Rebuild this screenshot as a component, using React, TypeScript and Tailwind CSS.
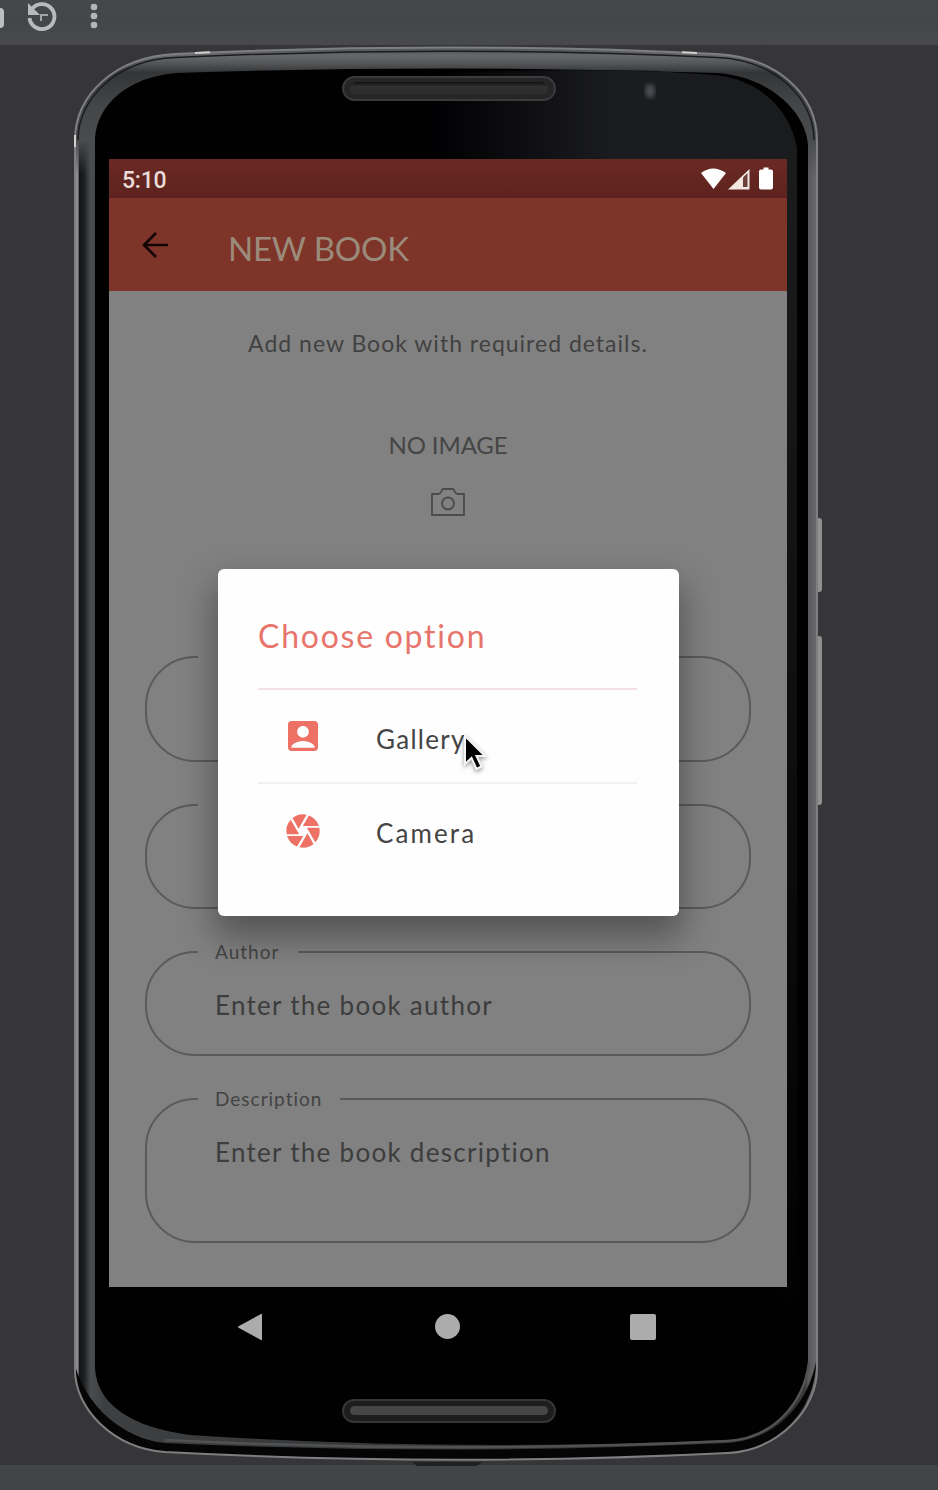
import React from "react";
import { MdAccountBox, MdCamera } from "react-icons/md";

function PhoneFrame() {
  return (
    <svg className="pointer-events-none absolute inset-0" width="938" height="1490" viewBox="0 0 938 1490" fill="none">
      <defs>
        <linearGradient id="rim" x1="75" y1="0" x2="817" y2="0" gradientUnits="userSpaceOnUse">
          <stop offset="0" stopColor="#8d8e8f" />
          <stop offset="0.004" stopColor="#8a8b8c" />
          <stop offset="0.006" stopColor="#131415" />
          <stop offset="0.012" stopColor="#1c1d1e" />
          <stop offset="0.021" stopColor="#4b4c4d" />
          <stop offset="0.04" stopColor="#3e3f40" />
          <stop offset="0.96" stopColor="#2b2c2d" />
          <stop offset="0.984" stopColor="#3a3b3c" />
          <stop offset="0.988" stopColor="#58595a" />
          <stop offset="1" stopColor="#69696b" />
        </linearGradient>
        <linearGradient id="topRim" x1="0" y1="47" x2="0" y2="175" gradientUnits="userSpaceOnUse">
          <stop offset="0" stopColor="#505152" />
          <stop offset="0.07" stopColor="#66686a" />
          <stop offset="0.13" stopColor="#545556" />
          <stop offset="0.2" stopColor="#343536" />
          <stop offset="0.45" stopColor="#444546" />
          <stop offset="0.72" stopColor="#4a4b4c" />
          <stop offset="1" stopColor="#4a4b4c" stopOpacity="0" />
        </linearGradient>
        <linearGradient id="glass" x1="430" y1="0" x2="800" y2="0" gradientUnits="userSpaceOnUse">
          <stop offset="0" stopColor="#000002" />
          <stop offset="0.5" stopColor="#1b1c20" />
          <stop offset="1" stopColor="#1a1b1d" />
        </linearGradient>
        <linearGradient id="glassFade" x1="0" y1="159" x2="0" y2="1300" gradientUnits="userSpaceOnUse">
          <stop offset="0" stopColor="#000" stopOpacity="0" />
          <stop offset="1" stopColor="#000" stopOpacity="0.95" />
        </linearGradient>
        <linearGradient id="slot" x1="0" y1="0" x2="0" y2="1">
          <stop offset="0" stopColor="#101011" />
          <stop offset="0.35" stopColor="#303031" />
          <stop offset="1" stopColor="#2b2b2c" />
        </linearGradient>
        <filter id="soft"><feGaussianBlur stdDeviation="2" /></filter>
      </defs>
      <rect x="814" y="518" width="8" height="74" rx="3" fill="#919192" />
      <rect x="814" y="636" width="8" height="169" rx="3" fill="#919192" />
      <path d="M412 1462h70l-5 4h-60z" fill="#202123" />
      <path d="M75 140C75 95 115 57 175 54Q448 41 717 54C777 57 817 95 817 140V1370C817 1408 780 1450 728 1453Q448 1467 165 1452C112 1448 75 1408 75 1370Z" fill="url(#rim)" />
      <path d="M75 175V140C75 95 115 57 175 54Q448 41 717 54C777 57 817 95 817 140V175Z" fill="url(#topRim)" />
      <path d="M75 1365C76 1415 118 1448 165 1452Q448 1467 728 1453C780 1448 816 1408 816 1362C808 1402 778 1440 728 1443Q448 1456 165 1443C122 1439 85 1404 75 1365Z" fill="#050506" />
      <path d="M78 140C78 98 117 60 175 57.500Q448 45 717 57.500C775 60 814 98 814 140" stroke="#1b1c1d" strokeWidth="1.5" />
      <path d="M75 1370V140C75 95 115 57 175 54Q448 41 717 54C777 57 817 95 817 140V1370C817 1408 780 1450 728 1453Q448 1467 165 1452C112 1448 75 1408 75 1370Z" stroke="#7e7f80" strokeWidth="2" />
      <path d="M195 53l15-.7M682 52.300l15 .7M75 135v12" stroke="#cfcfcf" strokeWidth="2" />
      <path d="M95 138C97 106 126 77 177 73Q448 64 717 73C765 76 805 108 808 145V1368C804 1404 773 1437 728 1440Q448 1452 190 1435C130 1427 97 1404 95 1368Z" fill="#010102" />
      <path d="M430 74Q600 66 714 75C758 79 790 108 797 148V1300H780V159H430Z" fill="url(#glass)" />
      <path d="M780 159h17v1141h-17z" fill="url(#glassFade)" />
      <path d="M165 1440Q448 1454 728 1441C773 1438 804 1404 809 1362" stroke="#515253" strokeWidth="2.5" />
      <rect x="343" y="77" width="212" height="23" rx="11.5" fill="#262627" stroke="#3b3b3c" strokeWidth="2" />
      <rect x="350" y="82" width="198" height="13" rx="6.5" fill="url(#slot)" />
      <rect x="343" y="1400" width="212" height="22" rx="11" fill="#1d1d1e" stroke="#353536" strokeWidth="2" />
      <rect x="350" y="1406" width="198" height="9" rx="4.5" fill="#464647" />
      <ellipse cx="650" cy="91" rx="5" ry="7" fill="#4b4d52" filter="url(#soft)" />
    </svg>
  );
}

function Toolbar() {
  return (
    <header className="h-[45px] w-full bg-gradient-to-b from-[#464749] via-[#434749] to-[#48494a]">
      <svg width="120" height="32" viewBox="0 0 120 32" fill="none">
        <rect x="-10" y="8" width="14" height="20" rx="4" fill="#bdbebf" />
        <path d="M31 10.500A12.500 12.500 0 1 1 29.500 18" stroke="#b9babb" strokeWidth="3.800" />
        <path d="M28 3V15H40Z" fill="#b9babb" />
        <path d="M41 21V15H48" stroke="#a3a4a5" strokeWidth="2" />
        <circle cx="94" cy="7" r="3.300" fill="#b4b5b6" />
        <circle cx="94" cy="16" r="3.300" fill="#b4b5b6" />
        <circle cx="94" cy="25" r="3.300" fill="#b4b5b6" />
      </svg>
    </header>
  );
}

function StatusBar() {
  return (
    <div className="flex h-[39px] items-center justify-between bg-gradient-to-b from-[#6b2924] to-[#5d231e] pl-[13px] pr-[12px]">
      <span className="font-[Roboto] text-[23px] font-medium leading-none tracking-[-0.2px] text-[#eadcda] pt-[3px]">5:10</span>
      <svg width="74" height="24" viewBox="0 0 74 24" fill="#fff">
        <path d="M0 6Q12 -3 25 6L12.500 22Z" />
        <path d="M27 22.500L48.500 2V22.500Z" fill="#f4e8e2" />
        <path d="M42 10.500L46.500 6V20H42Z" fill="#6b4039" />
        <path d="M62.500 2.500v-2h5v2h2.500q2 0 2 2v16q0 2-2 2h-10q-2 0-2-2v-16q0-2 2-2z" />
      </svg>
    </div>
  );
}

type FieldProps = { label: string; placeholder: string; size: string; notch: string };

function Field({ label, placeholder, size, notch }: FieldProps) {
  return (
    <fieldset className={`rounded-[50px] border-2 border-[#5a5a5a] ${size}`}>
      <legend className={`ml-[51px] flex h-0 items-center whitespace-nowrap pl-[17px] text-[19px] text-[#434343] ${notch}`}>{label}</legend>
      <p className="pl-[68px] pt-[34px] text-[26px] leading-9 tracking-[1.28px] text-[#3d3d3d]">{placeholder}</p>
    </fieldset>
  );
}

function OptionsDialog() {
  return (
    <div className="absolute left-[109px] top-[410px] h-[347px] w-[461px] rounded-[6px] bg-[#fefefe] pl-[40px] pr-[42px] pt-[44px] shadow-[0_18px_34px_4px_rgba(0,0,0,0.34)]">
      <h2 className="h-[75px] text-[32px] leading-[46px] tracking-[1.75px] text-[#e8756b]">Choose option</h2>
      <div className="flex h-[94px] items-center border-t-2 border-[#f3e0e5] pl-[25px]">
        <MdAccountBox className="h-10 w-10 text-[#ed7165]" />
        <span className="ml-[53px] pt-[5px] text-[26px] leading-9 tracking-[1.3px] text-[#444]">Gallery</span>
      </div>
      <div className="flex h-[95px] items-center border-t-2 border-[#f0f0f2] pl-[25px]">
        <MdCamera className="h-10 w-10 text-[#ed7165]" />
        <span className="ml-[53px] pt-[5px] text-[26px] leading-9 tracking-[2.1px] text-[#444]">Camera</span>
      </div>
      <svg className="absolute left-[244px] top-[164px] drop-shadow-[0_2px_2px_rgba(0,0,0,0.4)]" width="28" height="40" viewBox="0 0 28 40">
        <path d="M3 3V31L9.500 25L14.500 36L19.500 33.500L14.500 23H23Z" fill="#000" stroke="#f4f4f4" strokeWidth="2" />
      </svg>
    </div>
  );
}

function Screen() {
  return (
    <section className="relative flex h-[1128px] w-[678px] flex-col bg-[#818181]">
      <StatusBar />
      <div className="flex h-[93px] items-center bg-[#7f3429] pl-[33px]">
        <svg width="27" height="28" viewBox="0 0 27 28" fill="none" stroke="#120504" strokeWidth="2.700">
          <path d="M26 14H2M14 2L2 14L14 26" />
        </svg>
        <h1 className="ml-[59px] pt-[8px] text-[33px] leading-none tracking-[-0.2px] text-[#9b8b7a]">NEW BOOK</h1>
      </div>
      <p className="mt-[34px] text-center text-[23px] leading-9 tracking-[1px] text-[#414141]">Add new Book with required details.</p>
      <div className="mt-[66px] flex flex-col items-center">
        <p className="text-[24px] leading-9 tracking-[-0.1px] text-[#454545]">NO IMAGE</p>
        <svg className="mt-[25px]" width="34" height="28" viewBox="0 0 34 28" fill="none" stroke="#4b4b4b" strokeWidth="1.800">
          <path d="M1 6H7Q9 6 10 4L11 2Q11.500 1 13 1H21Q22.500 1 23 2L24 4Q25 6 27 6H33V27H1Z" />
          <circle cx="17" cy="15.500" r="6" />
        </svg>
      </div>
      <div className="mt-[140px] flex flex-col gap-[42px] pl-[36px]">
        <Field label="" placeholder="" size="h-[106px] w-[606px]" notch="w-[60px]" />
        <Field label="" placeholder="" size="h-[105px] w-[606px]" notch="w-[60px]" />
        <Field label="Author" placeholder="Enter the book author" size="h-[105px] w-[606px]" notch="w-[100px] tracking-[1px]" />
        <Field label="Description" placeholder="Enter the book description" size="h-[145px] w-[606px]" notch="w-[142px] tracking-[1px]" />
      </div>
      <OptionsDialog />
    </section>
  );
}

function NavigationBar() {
  return (
    <nav className="flex h-[79px] w-[678px] items-center justify-between pl-[129px] pr-[131px]">
      <svg width="26" height="28" viewBox="0 0 26 28" fill="#acacac"><path d="M23 1Q24 0 24 2V26Q24 28 23 27L1 15Q-1 14 1 13Z" /></svg>
      <div className="h-[25px] w-[25px] rounded-full bg-[#acacac]" />
      <div className="h-[26px] w-[26px] rounded-[2px] bg-[#acacac]" />
    </nav>
  );
}

export default function App() {
  return (
    <div className="relative flex h-[1490px] w-[938px] flex-col overflow-hidden bg-[#363638] font-[Lato,sans-serif]">
      <Toolbar />
      <PhoneFrame />
      <main className="relative flex-1 pl-[109px] pt-[114px]">
        <Screen />
        <NavigationBar />
      </main>
      <footer className="h-[25px] bg-[#434446]" />
    </div>
  );
}
